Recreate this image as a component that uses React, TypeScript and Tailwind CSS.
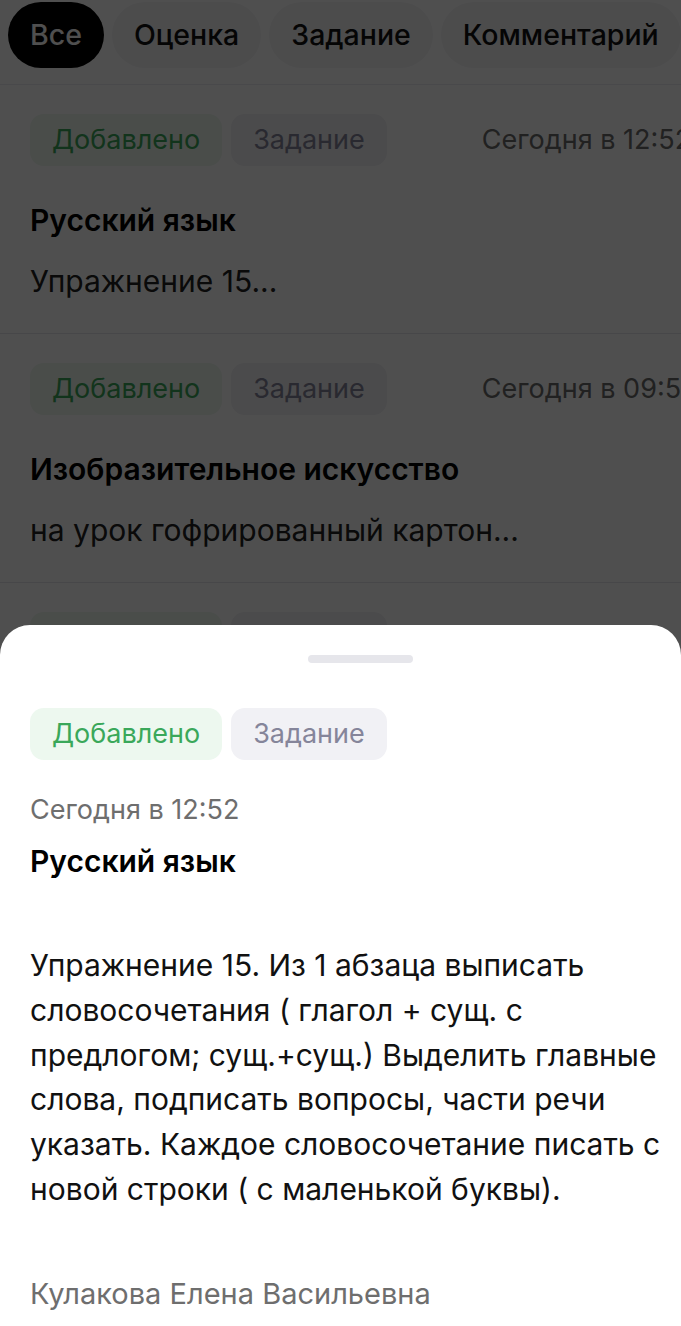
import React from 'react';

const FONT = "font-['Inter','Noto_Sans',sans-serif]";

const tabs = ['Все', 'Оценка', 'Задание', 'Комментарий'];

const items = [
  { date: 'Сегодня в 12:52', title: 'Русский язык', text: 'Упражнение 15...' },
  { date: 'Сегодня в 09:52', title: 'Изобразительное искусство', text: 'на урок гофрированный картон...' },
  { date: 'Вчера в 18:10', title: 'Математика', text: 'Стр. 42, номер 3...' },
];

const Chips: React.FC = () => (
  <div className="flex items-center gap-[9px] shrink-0">
    <span className="h-[52px] px-[22px] rounded-[14px] bg-[#edf8ef] text-[#3aa85a] text-[27px] flex items-center">Добавлено</span>
    <span className="h-[52px] px-[22px] rounded-[14px] bg-[#f1f1f5] text-[#85859a] text-[27px] flex items-center">Задание</span>
  </div>
);

const App: React.FC = () => {
  return (
    <div className={`relative w-[681px] h-[1326px] overflow-hidden bg-white ${FONT}`}>
      {/* фон: список */}
      <div className="flex gap-[8px] px-[8px] pt-[2px] pb-[16px] whitespace-nowrap">
        {tabs.map((t, i) => (
          <span
            key={t}
            className={`h-[66px] px-[22px] rounded-[33px] flex items-center text-[28.5px] font-medium shrink-0 ${i === 0 ? 'bg-black text-white' : 'bg-[#f4f4f6] text-[#111]'}`}
          >
            {t}
          </span>
        ))}
      </div>
      <div className="border-t border-[#ececf0]">
        {items.map((it) => (
          <div key={it.title} className="px-[30px] pt-[29px] pb-[34px] border-b border-[#e6e6ea]">
            <div className="flex items-center whitespace-nowrap">
              <Chips />
              <span className="ml-[95px] text-[27px] text-[#6b6b6b]">{it.date}</span>
            </div>
            <p className="mt-[36px] text-[30px] font-semibold text-black leading-[36px]">{it.title}</p>
            <p className="mt-[25px] text-[30px] text-[#222] leading-[36px]">{it.text}</p>
          </div>
        ))}
      </div>

      {/* затемнение */}
      <div className="absolute inset-0 bg-black/[0.69]" />

      {/* нижняя шторка */}
      <div className="absolute inset-x-0 top-[625px] bottom-0 bg-white rounded-t-[30px] pl-[30px] pr-[14px]">
        <div className="pt-[30px] pl-[278px]">
          <div className="w-[105px] h-[8px] rounded-full bg-[#e6e6eb]" />
        </div>
        <div className="mt-[45px]">
          <Chips />
        </div>
        <p className="mt-[32px] text-[27px] text-[#6e6e6e] leading-[36px]">Сегодня в 12:52</p>
        <p className="mt-[15px] text-[30px] font-semibold text-black leading-[36px]">Русский язык</p>
        <p className="mt-[64px] text-[30px] text-[#111] leading-[44.8px]">
          Упражнение 15. Из 1 абзаца выписать словосочетания ( глагол + сущ. с предлогом; сущ.+сущ.) Выделить главные слова, подписать вопросы, части речи указать. Каждое словосочетание писать с новой строки ( с маленькой буквы).
        </p>
        <p className="mt-[64px] text-[29px] text-[#6e6e6e] leading-[36px]">Кулакова Елена Васильевна</p>
      </div>
    </div>
  );
};

export default App;
